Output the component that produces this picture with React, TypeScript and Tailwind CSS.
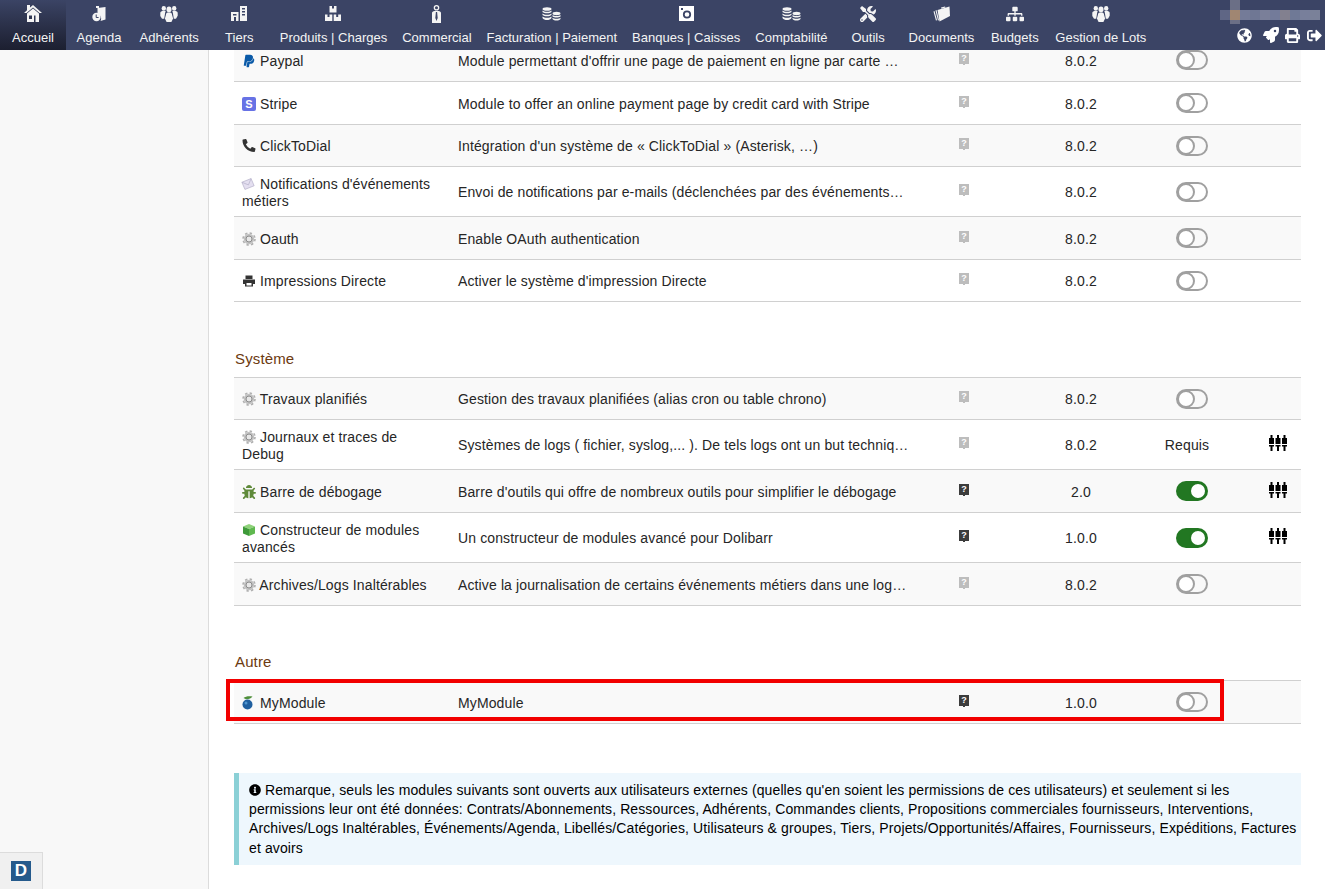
import type { ReactNode } from 'react';
import { FaTools, FaSitemap, FaGlobeAmericas, FaRocket, FaPrint, FaSignOutAlt, FaInfoCircle, FaPaypal, FaPhoneAlt, FaBug } from 'react-icons/fa';

function HomeIcon() {
  return (
    <svg viewBox="0 0 18 17" className="w-[18px] h-[17px]" fill="currentColor">
      <path d="M3 0h3v2.500L9 0l9 8h-2.500L9 2.500 2.500 8H0l3-2.700z" />
      <path fillRule="evenodd" d="M3 8.500 9 3.500l6 5V17h-3.500v-6.500H10V17H3zM5 10.500V14h3v-3.500z" />
    </svg>
  );
}

function PeopleIcon() {
  return (
    <svg viewBox="0 0 18 16" className="w-[18px] h-4" fill="currentColor">
      <ellipse cx="3.800" cy="2.400" rx="2.200" ry="2.400" />
      <path d="M.3 7c0-1.500 1.300-2 3.500-2 .8 0 1.500.1 2 .3-.6.7-.8 1.500-.8 2.500l-.8 5H2L.3 10z" />
      <ellipse cx="14.200" cy="2.400" rx="2.200" ry="2.400" />
      <path d="M17.700 7c0-1.500-1.300-2-3.500-2-.8 0-1.500.1-2 .3.600.7.800 1.500.8 2.500l.8 5H16l1.700-3z" />
      <ellipse cx="9" cy="3.400" rx="2.500" ry="2.800" />
      <path d="M5.900 9c0-2 1.100-2.500 3.100-2.500s3.100.5 3.100 2.500l1 3.500-1.700 3.500H6.600l-1.700-3.500z" />
    </svg>
  );
}

function AgendaIcon() {
  return (
    <svg viewBox="0 0 14 16" className="w-[14px] h-4" fill="currentColor">
      <path d="M5.500 2 13.500 1v12.500L8.500 15c1.400-2.400.8-6-3-7z" />
      <path d="M4 0h3v2H4z" />
      <circle cx="4.500" cy="11" r="4.200" />
      <path d="M4.200 8.500v3h2.400" stroke="#3b4465" strokeWidth="1" fill="none" />
    </svg>
  );
}

function BuildingIcon() {
  return (
    <svg viewBox="0 0 16 16" className="w-4 h-4" fill="currentColor">
      <path fillRule="evenodd" d="M9 0h7v15H9zM11 2v1.500h3V2zM11 5v1.500h3V5zM11 8v1.500h3V8z" />
      <path fillRule="evenodd" d="M0 6h7.500v9H5v-4H3v4H0zM2 8v1.500h3.500V8z" />
    </svg>
  );
}

function BoxesIcon() {
  return (
    <svg viewBox="0 0 16 16" className="w-4 h-4" fill="currentColor">
      <path fillRule="evenodd" d="M4.500 0h7v6.500h-7zM7 0v2.500h2V0z" />
      <path fillRule="evenodd" d="M0 8.500h7.300V15H0zM2.500 8.500V11h2V8.500z" />
      <path fillRule="evenodd" d="M8.700 8.500H16V15H8.700zM11.200 8.500V11h2V8.500z" />
    </svg>
  );
}

function TieIcon() {
  return (
    <svg viewBox="0 0 11 18" className="w-[11px] h-[18px]" fill="currentColor">
      <path fillRule="evenodd" d="M5.500 0a2.800 2.800 0 1 1 0 5.600 2.800 2.800 0 0 1 0-5.600zm0 1.300a1.500 1.500 0 1 0 0 3 1.500 1.500 0 0 0 0-3z" />
      <path fillRule="evenodd" d="M1 8c0-1 1-2 2.500-2h4C9 6 10 7 10 8v10H1zM4.900 7 4.300 13l1.200 3 1.200-3-.6-6z" />
    </svg>
  );
}

function CoinsIcon() {
  return (
    <svg viewBox="0 0 19 14" className="w-[19px] h-[14px]" fill="currentColor">
      <ellipse cx="5" cy="2" rx="4.500" ry="1.800" />
      <path d="M.5 3.500c1 1 2.500 1.300 4.500 1.300s3.500-.3 4.500-1.300V5c-1 1-2.500 1.300-4.500 1.300S1.500 6 .5 5z" />
      <path d="M.5 6.500c1 1 2.500 1.300 4.500 1.300s3.500-.3 4.500-1.300V8c-1 1-2.500 1.300-4.500 1.300S1.500 9 .5 8z" />
      <path d="M.5 9.500c1 1 2.500 1.300 4.500 1.300s3.500-.3 4.500-1.300V11c-1 1.500-2.500 2-4.500 2s-3.500-.5-4.500-2z" />
      <ellipse cx="14.500" cy="6.500" rx="4" ry="1.700" />
      <path d="M10.500 8c1 .8 2.300 1 4 1s3-.2 4-1v1.500c-1 .8-2.300 1-4 1s-3-.2-4-1z" />
      <path d="M10.500 10.800c1 .8 2.300 1 4 1s3-.2 4-1V12c-1 1-2.300 1.500-4 1.500s-3-.5-4-1.500z" />
    </svg>
  );
}

function SafeIcon() {
  return (
    <svg viewBox="0 0 15 15" className="w-[15px] h-[15px]">
      <rect width="15" height="15" fill="#ffffff" />
      <circle cx="8" cy="8.500" r="3.200" fill="none" stroke="#3b4465" strokeWidth="1.800" />
      <rect x="2" y="2" width="2" height="2" fill="#3b4465" />
    </svg>
  );
}

function FolderIcon() {
  return (
    <svg viewBox="0 0 17 16" className="w-[17px] h-4" fill="currentColor">
      <path d="M4.500 4 16.500.5l.5 9.500-10.500 5.500z" />
      <path d="M2.500 4.500 3.500 4 6 14l-1 .7zM.5 5.500l1-.5L4 14l-1 .7z" />
      <path d="M8 1.500 12 .5l.5 1-4 1.200z" />
    </svg>
  );
}

function SlidersIcon() {
  return (
    <svg viewBox="0 0 18 16" className="w-[18px] h-4 -mt-[5px]" fill="#000000">
      {[0, 6.5, 13].map((x) => (
        <path key={x} d={`M${x + 1.5} 0h2v3h1.500v6H${x}V3h1.500zM${x} 10h5v1.500h-1.500V16h-2v-4.500H${x}z`} />
      ))}
    </svg>
  );
}

function HelpIcon({ active }: { active?: boolean }) {
  return (
    <div className={`relative w-[10px] h-[11px] flex items-center justify-center text-[9px] leading-none font-bold text-white ${active ? 'bg-[#3c3c3c]' : 'bg-[#bdbdbd]'}`}>
      ?
      <div className={`absolute left-1 -bottom-px w-[2px] h-px ${active ? 'bg-[#3c3c3c]' : 'bg-[#bdbdbd]'}`} />
    </div>
  );
}

function Toggle({ on }: { on?: boolean }) {
  if (on) {
    return (
      <div className="w-8 h-5 rounded-full bg-[#227722] flex items-center justify-end pr-[1px]">
        <div className="w-[18px] h-[18px] rounded-full bg-white border-2 border-[#227722]" />
      </div>
    );
  }
  return (
    <div className="w-8 h-5 rounded-full border-2 border-[#a0a0a0] flex items-center">
      <div className="w-[18px] h-[18px] -ml-[1px] rounded-full bg-white border-2 border-[#a0a0a0]" />
    </div>
  );
}

function StripeIcon() {
  return (
    <svg viewBox="0 0 14 14" className="w-[14px] h-[14px]">
      <rect width="14" height="14" rx="2" fill="#6772e5" />
      <text x="7" y="11" textAnchor="middle" fontSize="11" fontWeight="700" fill="#ffffff">S</text>
    </svg>
  );
}

function GearIcon() {
  return (
    <svg viewBox="0 0 14 14" className="w-[14px] h-[14px]" fill="none">
      <circle cx="7" cy="7" r="6" stroke="#b0b0b0" strokeWidth="1.600" strokeDasharray="2.400 2.300" />
      <circle cx="7" cy="7" r="5.200" fill="#c2c2c2" />
      <circle cx="7" cy="7" r="3" fill="#e8e8e8" stroke="#8c8c8c" strokeWidth="1" />
    </svg>
  );
}

function EnvelopeIcon() {
  return (
    <svg viewBox="0 0 16 14" className="w-[14px] h-[14px] -ml-px">
      <path d="M1 5 11.500.8 15 9 4.500 13.200z" fill="#e4dff0" stroke="#b5b0c8" strokeWidth=".8" />
      <path d="M1 5 8.500 8 11.500.8" fill="none" stroke="#b5b0c8" strokeWidth=".8" />
    </svg>
  );
}

function PrinterIcon() {
  return (
    <svg viewBox="0 0 14 14" className="w-[14px] h-[14px]" fill="#333333">
      <path d="M3.500 1.500h7V5h-7z" />
      <path fillRule="evenodd" d="M1 5.500h12V10h-2v2.500H3V10H1zM4.500 9v2.500h5V9z" />
    </svg>
  );
}

function CubeIcon() {
  return (
    <svg viewBox="0 0 14 14" className="w-[14px] h-[14px]">
      <path d="M1 3.500 7 1l6 2.500L7 6z" fill="#8fd27a" />
      <path d="M1 3.500 7 6v7l-6-2.500z" fill="#3f9a3a" />
      <path d="M13 3.500 7 6v7l6-2.500z" fill="#5fb84f" />
    </svg>
  );
}

function MyModuleIcon() {
  return (
    <svg viewBox="0 0 12 14" className="w-3 h-[14px]">
      <path d="M1.500 2c2-2 6-2 9-1.500-1 2-5 3-7 2.500z" fill="#4f8f3a" />
      <circle cx="5.500" cy="8.500" r="5" fill="#1f5f9f" />
      <circle cx="4" cy="7" r="1.500" fill="#4f95cf" />
    </svg>
  );
}

const navItems = [
  { label: 'Accueil', icon: <HomeIcon />, active: true },
  { label: 'Agenda', icon: <AgendaIcon /> },
  { label: 'Adhérents', icon: <PeopleIcon /> },
  { label: 'Tiers', icon: <BuildingIcon /> },
  { label: 'Produits | Charges', icon: <BoxesIcon /> },
  { label: 'Commercial', icon: <TieIcon /> },
  { label: 'Facturation | Paiement', icon: <CoinsIcon /> },
  { label: 'Banques | Caisses', icon: <SafeIcon /> },
  { label: 'Comptabilité', icon: <CoinsIcon /> },
  { label: 'Outils', icon: <FaTools className="w-4 h-4" /> },
  { label: 'Documents', icon: <FolderIcon /> },
  { label: 'Budgets', icon: <FaSitemap className="w-[18px] h-4" /> },
  { label: 'Gestion de Lots', icon: <PeopleIcon /> },
];

const blurCells = ['bg-[#5f6685]', 'bg-[#a08672]', 'bg-[#747b98]', 'bg-[#6f7794]', 'bg-[#7a7f99]', 'bg-[#737b9a]', 'bg-[#82808f]', 'bg-[#6f7996]', 'bg-[#787f9b]', 'bg-[#7a8199]'];

type Row = {
  icon: ReactNode;
  name: string;
  desc: string;
  version: string;
  height: string;
  helpActive?: boolean;
  status?: 'on' | 'off' | 'required';
  settings?: boolean;
};

const paymentRows: Row[] = [
  { icon: <FaPaypal className="w-[14px] h-[14px] text-[#0a5aa8]" />, name: 'Paypal', desc: "Module permettant d'offrir une page de paiement en ligne par carte …", version: '8.0.2', height: 'h-[43px]' },
  { icon: <StripeIcon />, name: 'Stripe', desc: 'Module to offer an online payment page by credit card with Stripe', version: '8.0.2', height: 'h-[43px]' },
  { icon: <FaPhoneAlt className="w-[14px] h-[13px] text-[#333333]" />, name: 'ClickToDial', desc: "Intégration d'un système de « ClickToDial » (Asterisk, …)", version: '8.0.2', height: 'h-[42px]' },
  { icon: <EnvelopeIcon />, name: "Notifications d'événements métiers", desc: 'Envoi de notifications par e-mails (déclenchées par des événements…', version: '8.0.2', height: 'h-[50px]' },
  { icon: <GearIcon />, name: 'Oauth', desc: 'Enable OAuth authentication', version: '8.0.2', height: 'h-[43px]' },
  { icon: <PrinterIcon />, name: 'Impressions Directe', desc: "Activer le système d'impression Directe", version: '8.0.2', height: 'h-[42px]' },
];

const systemRows: Row[] = [
  { icon: <GearIcon />, name: 'Travaux planifiés', desc: 'Gestion des travaux planifiées (alias cron ou table chrono)', version: '8.0.2', height: 'h-[42px]' },
  { icon: <GearIcon />, name: 'Journaux et traces de Debug', desc: 'Systèmes de logs ( fichier, syslog,... ). De tels logs ont un but techniq…', version: '8.0.2', status: 'required', settings: true, height: 'h-[50px]' },
  { icon: <FaBug className="w-[14px] h-[14px] text-[#5f8a3a]" />, name: 'Barre de débogage', desc: "Barre d'outils qui offre de nombreux outils pour simplifier le débogage", version: '2.0', helpActive: true, status: 'on', settings: true, height: 'h-[43px]' },
  { icon: <CubeIcon />, name: 'Constructeur de modules avancés', desc: 'Un constructeur de modules avancé pour Dolibarr', version: '1.0.0', helpActive: true, status: 'on', settings: true, height: 'h-[50px]' },
  { icon: <GearIcon />, name: 'Archives/Logs Inaltérables', desc: 'Active la journalisation de certains événements métiers dans une log…', version: '8.0.2', height: 'h-[43px]' },
];

const otherRows: Row[] = [
  { icon: <MyModuleIcon />, name: 'MyModule', desc: 'MyModule', version: '1.0.0', helpActive: true, height: 'h-[43px]' },
];

function ModuleTable({ rows }: { rows: Row[] }) {
  return (
    <div>
      {rows.map((row, i) => (
        <div
          key={row.name}
          className={`flex items-center pt-[2px] border-b border-[#d0d0d0] ${row.height} ${i % 2 === 0 ? 'bg-[#f9f9f9]' : 'bg-white'}`}
        >
          <div className="w-[224px] pl-2 pr-4 pt-[1px] leading-[17.5px] shrink-0">
            <span className="inline-block w-[14px] h-[14px] align-[-2px]">{row.icon}</span> {row.name}
          </div>
          <div className="w-[500px] shrink-0 whitespace-nowrap">{row.desc}</div>
          <div className="w-[12px] flex justify-center shrink-0 -mt-[6px]">
            <HelpIcon active={row.helpActive} />
          </div>
          <div className="w-[222px] text-center shrink-0">{row.version}</div>
          <div className="w-0 shrink-0 flex justify-center">
            {row.status === 'required' ? (
              <span className="whitespace-nowrap mr-[10px]">Requis</span>
            ) : (
              <div className="shrink-0 -mt-[2px]"><Toggle on={row.status === 'on'} /></div>
            )}
          </div>
          <div className="flex-1 flex justify-end pr-[14px]">
            {row.settings && <SlidersIcon />}
          </div>
        </div>
      ))}
    </div>
  );
}

export default function App() {
  return (
    <div className="h-[889px] overflow-hidden flex flex-col bg-white text-[14px] text-[#262626] font-['Liberation_Sans',Arial,sans-serif]">
      {/* Top menu */}
      <header className="h-[50px] shrink-0 flex bg-[#3b4465] text-[#f4f4f4] relative">
        {navItems.map((item) => (
          <div
            key={item.label}
            className={`min-w-[66px] px-[7.5px] flex flex-col items-center ${item.active ? 'bg-gradient-to-b from-[#3b4465] to-[#1c1f30]' : ''}`}
          >
            <div className="h-[30px] flex items-center justify-center pb-[3px]">{item.icon}</div>
            <span className="text-[13px] leading-[15px] whitespace-nowrap">{item.label}</span>
          </div>
        ))}
        {/* blurred user name */}
        <div className="absolute left-[1220px] top-0 w-[100px] h-[24px]">
          <div className="absolute left-[10px] top-0 w-[10px] h-[24px] bg-[#6b6f86]" />
          <div className="absolute left-0 top-[10px] w-full h-[10px] flex">
            {blurCells.map((cell, i) => (
              <div key={i} className={`w-[10px] ${cell}`} />
            ))}
          </div>
        </div>
        <div className="absolute left-[1237px] top-[27px] flex items-center text-white">
          <FaGlobeAmericas className="w-[15px] h-[15px]" />
          <FaRocket className="w-[16px] h-[16px] ml-[11px]" />
          <FaPrint className="w-[15px] h-[15px] ml-[6px]" />
          <FaSignOutAlt className="w-[15px] h-[15px] ml-[7px]" />
        </div>
      </header>

      <div className="flex-1 flex min-h-0">
        {/* Left menu */}
        <aside className="w-[209px] shrink-0 bg-[#f8f8f8] border-r border-[#dcdcdc] relative">
          <div className="absolute left-0 bottom-0 w-[43px] h-[37px] bg-[#f0f0f0] border-t border-r border-[#dcdcdc] flex items-center justify-center">
            <div className="w-5 h-5 bg-[#255a8c] text-white text-[17px] font-bold flex items-center justify-center">D</div>
          </div>
        </aside>

        {/* Main content, scrolled a little so the first row sits under the menu */}
        <main className="flex-1 overflow-hidden relative tracking-[0.125px]">
          <div className="pl-[25px] pr-[24px] -mt-[11px]">
            <ModuleTable rows={paymentRows} />
            <h2 className="text-[15px] leading-[17px] text-[#6c3a10] mt-[48px] mb-[10px] pl-px">Système</h2>
            <div className="border-t border-[#d0d0d0]">
              <ModuleTable rows={systemRows} />
            </div>
            <h2 className="text-[15px] leading-[17px] text-[#6c3a10] mt-[47px] mb-[10px] pl-px">Autre</h2>
            <div className="border-t border-[#d0d0d0]">
              <ModuleTable rows={otherRows} />
            </div>
            <div className="mt-[49px] h-[92px] border-l-[5px] border-[#8bd0d6] bg-[#eef7fd] pl-[10px] pr-[3px] pt-[8px] leading-[19.2px] tracking-[0.11px] text-black">
              <FaInfoCircle className="inline w-3 h-3 align-[-1px]" /> Remarque, seuls les modules suivants sont ouverts aux utilisateurs externes (quelles qu'en soient les permissions de ces utilisateurs) et seulement si les permissions leur ont été données: Contrats/Abonnements, Ressources, Adhérents, Commandes clients, Propositions commerciales fournisseurs, Interventions, Archives/Logs Inaltérables, Événements/Agenda, Libellés/Catégories, Utilisateurs &amp; groupes, Tiers, Projets/Opportunités/Affaires, Fournisseurs, Expéditions, Factures et avoirs
            </div>
          </div>
          {/* highlight drawn on the screenshot */}
          <div className="absolute left-[17px] top-[629px] w-[998px] h-[42px] border-4 border-[#f20000] pointer-events-none" />
        </main>
      </div>
    </div>
  );
}
